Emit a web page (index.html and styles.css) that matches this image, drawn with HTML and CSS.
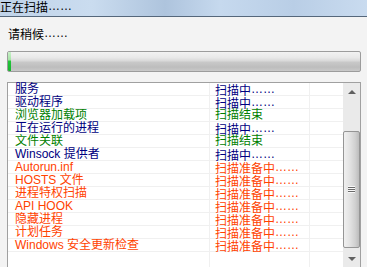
FILE: index.html
```html
<!DOCTYPE html>
<html lang="zh-CN">
    <head>
        <title>正在扫描</title>
        <meta charset="UTF-8"/>
        <link rel="stylesheet" href="styles.css">
    </head>
    <body>
        <div id="titulo">正在扫描<i class="pts">……</i></div>
        <div id="conteudo">
            <div class="aviso">请稍候<i class="pts">……</i></div>
            <div class="progresso"><div class="preenchido"></div></div>

            <div class="lista">
                <div class="linhas">
                    <div class="linha azul"><span>服务</span><span>扫描中<i class="pts">……</i></span><span></span></div>
                    <div class="linha azul"><span>驱动程序</span><span>扫描中<i class="pts">……</i></span><span></span></div>
                    <div class="linha verde"><span>浏览器加载项</span><span>扫描结束</span><span></span></div>
                    <div class="linha azul"><span>正在运行的进程</span><span>扫描中<i class="pts">……</i></span><span></span></div>
                    <div class="linha verde"><span>文件关联</span><span>扫描结束</span><span></span></div>
                    <div class="linha azul"><span>Winsock 提供者</span><span>扫描中<i class="pts">……</i></span><span></span></div>
                    <div class="linha laranja"><span>Autorun.inf</span><span>扫描准备中<i class="pts">……</i></span><span></span></div>
                    <div class="linha laranja"><span>HOSTS 文件</span><span>扫描准备中<i class="pts">……</i></span><span></span></div>
                    <div class="linha laranja"><span>进程特权扫描</span><span>扫描准备中<i class="pts">……</i></span><span></span></div>
                    <div class="linha laranja"><span>API HOOK</span><span>扫描准备中<i class="pts">……</i></span><span></span></div>
                    <div class="linha laranja"><span>隐藏进程</span><span>扫描准备中<i class="pts">……</i></span><span></span></div>
                    <div class="linha laranja"><span>计划任务</span><span>扫描准备中<i class="pts">……</i></span><span></span></div>
                    <div class="linha laranja"><span>Windows 安全更新检查</span><span>扫描准备中<i class="pts">……</i></span><span></span></div>
                    <div class="linha vazia"><span></span><span></span><span></span></div>
                </div>
                <div class="rolagem">
                    <div class="seta cima"></div>
                    <div class="trilho">
                        <div class="polegar"><div class="pega"></div></div>
                    </div>
                    <div class="seta baixo"></div>
                </div>
            </div>
        </div>
    </body>
</html>
```

FILE: styles.css
```css
* {
    margin: 0px;
    padding: 0px;
    box-sizing: border-box;
}

body {
    background: #f3f3f3;
    font-family: "Liberation Sans", "Noto Sans CJK SC", sans-serif;
    font-size: 12px;
    height: 267px;
    overflow: hidden;
}

/* reticencias no meio da linha, como no sistema */
.pts {
    font-style: normal;
    vertical-align: 2px;
}

#titulo {
    height: 17px;
    line-height: 12px;
    color: #000;
    background: linear-gradient(90deg, #c0d3e9 0%, #cadcef 25%, #aec4dd 45%, #c6d9ee 60%, #b9cee6 80%, #c9dbef 100%);
    border-bottom: 1px solid #55677b;
}

#conteudo {
    padding: 9px 6px 0px 7px;
}

.aviso {
    height: 14px;
    line-height: 14px;
    padding-left: 1px;
    color: #000;
}

.progresso {
    margin-top: 11px;
    height: 21px;
    border: 1px solid #9c9c9c;
    border-radius: 2px;
    background: linear-gradient(#f2f2f2 0%, #e8e8e8 30%, #dadada 45%, #c8c8c8 55%, #bdbdbd 80%, #c9c9c9 100%);
    overflow: hidden;
}

.preenchido {
    width: 3px;
    height: 100%;
    background: linear-gradient(#c8f0c8 0%, #a6e4a6 40%, #22c43a 50%, #18b52e 100%);
}

.lista {
    margin-top: 10px;
    height: 185px;
    border: 1px solid #a0a0a0;
    border-bottom: none;
    background: #fff;
    display: flex;
}

.linhas {
    width: 335px;
}

.linha {
    display: grid;
    grid-template-columns: 202px 100px 33px;
    height: 13px;
    line-height: 13px;
    border-bottom: 1px solid #f0f0f0;
    white-space: nowrap;
}

.linha span {
    border-right: 1px solid #f0f0f0;
}

.linha span:first-child {
    padding-left: 7px;
}

.linha span:nth-child(2) {
    padding-left: 5px;
}

.linha span:last-child {
    border-right: none;
}

.vazia {
    height: 15px;
    border-bottom: none;
}

.azul { color: #000080; }
.verde { color: #008000; }
.laranja { color: #ff4200; }

.rolagem {
    width: 17px;
    display: flex;
    flex-direction: column;
    background: #eaeaea;
}

.seta {
    height: 17px;
    display: flex;
    align-items: center;
    justify-content: center;
}

.seta::before {
    content: "";
    border-left: 4px solid transparent;
    border-right: 4px solid transparent;
}

.cima::before {
    border-bottom: 4px solid #606060;
}

.baixo::before {
    border-top: 4px solid #606060;
}

.trilho {
    flex: 1;
    padding-top: 31px;
}

.polegar {
    height: 117px;
    border: 1px solid #959595;
    border-radius: 2px;
    background: linear-gradient(90deg, #f0f0f0 0%, #e2e2e2 40%, #d0d0d0 75%, #bcbcbc 100%);
    display: flex;
    align-items: center;
    justify-content: center;
}

.pega {
    width: 7px;
    height: 7px;
    background: repeating-linear-gradient(#f8f8f8 0px, #f8f8f8 1px, #6a6a6a 1px, #6a6a6a 2px);
}
```
